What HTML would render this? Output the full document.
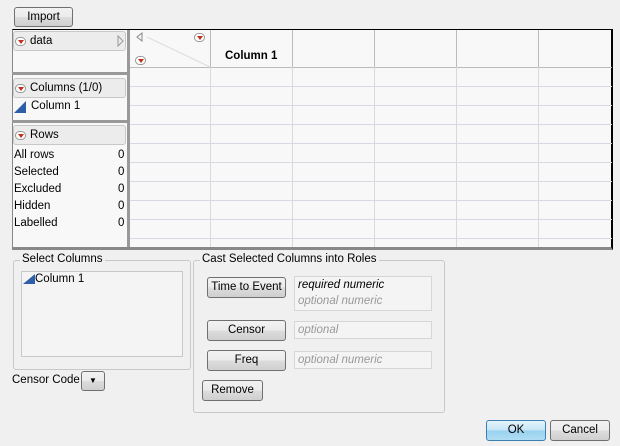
<!DOCTYPE html>
<html><head><style>
*{box-sizing:border-box;margin:0;padding:0}
body{width:620px;height:446px;background:#f0f0f0;font-family:"Liberation Sans",sans-serif;font-size:11.5px;color:#000;position:relative;overflow:hidden}
.a{position:absolute}
.btn{position:absolute;border:1px solid #707070;border-radius:3px;background:linear-gradient(#f2f2f2,#ebebeb 50%,#dddddd 50%,#cfcfcf);text-align:center;font-size:11.5px}
.hl{position:absolute;height:1px;background:#d8d8e2}
.vl{position:absolute;width:1px;background:#d8d8e2}
.hdr{position:absolute;left:13px;width:113px;border:1px solid #c8c8c8;border-radius:3px;background:#ececec;height:20px;padding-left:16px;line-height:18px}
.dd{position:absolute;width:11px;height:9px;border:1px solid #999;border-radius:5px;background:#fff}
.dd:after{content:"";position:absolute;left:2px;top:2px;border-left:3px solid transparent;border-right:3px solid transparent;border-top:4px solid #c0301c}
.fs{position:absolute;border:1px solid #c8c8c8;border-radius:3px}
.lg{position:absolute;background:#f0f0f0;padding:0 2px;top:-8px}
.fld{position:absolute;border:1px solid #d6d6d6;background:#f4f4f4;font-style:italic;color:#999;padding-left:3px}
</style></head><body>
<div class="btn" style="left:14px;top:7px;width:59px;height:20px;line-height:18px">Import</div>

<div class="a" style="left:12px;top:29px;width:601px;height:221px;background:#f8f8f8;border-top:1px solid #000;border-right:2px solid #000;border-bottom:3px solid #888;border-left:1px solid #888"></div>
<div class="a" style="left:127px;top:30px;width:3px;height:217px;background:#999"></div>
<div class="a" style="left:12px;top:72px;width:115px;height:3px;background:#999"></div>
<div class="a" style="left:12px;top:120px;width:115px;height:3px;background:#999"></div>

<div class="hdr" style="top:31px">data</div><div class="dd" style="left:15px;top:37px"></div>
<div class="a" style="left:117px;top:35px;width:8px;height:12px"><svg width="8" height="12"><path d="M1 1 L6 6 L1 11 Z" fill="none" stroke="#999"/></svg></div>
<div class="hdr" style="top:78px">Columns (1/0)</div><div class="dd" style="left:15px;top:84px"></div>
<div class="a" style="left:14px;top:101px;width:0;height:0;border-left:12px solid transparent;border-bottom:12px solid #2d5ea8"></div>
<div class="a" style="left:31px;top:100px">Column 1</div>
<div class="hdr" style="top:125px">Rows</div><div class="dd" style="left:15px;top:131px"></div>
<div class="a" style="left:14px;top:147px;line-height:17px">All rows<br>Selected<br>Excluded<br>Hidden<br>Labelled</div>
<div class="a" style="left:118px;top:147px;line-height:17px">0<br>0<br>0<br>0<br>0</div>

<div class="a" style="left:130px;top:67px;width:482px;height:1px;background:#bbb"></div>
<div class="hl" style="left:130px;top:86px;width:482px"></div>
<div class="hl" style="left:130px;top:105px;width:482px"></div>
<div class="hl" style="left:130px;top:124px;width:482px"></div>
<div class="hl" style="left:130px;top:143px;width:482px"></div>
<div class="hl" style="left:130px;top:162px;width:482px"></div>
<div class="hl" style="left:130px;top:181px;width:482px"></div>
<div class="hl" style="left:130px;top:200px;width:482px"></div>
<div class="hl" style="left:130px;top:219px;width:482px"></div>
<div class="hl" style="left:130px;top:238px;width:482px"></div>
<div class="a" style="left:210px;top:30px;width:1px;height:37px;background:#bbb"></div>
<div class="a" style="left:292px;top:30px;width:1px;height:37px;background:#bbb"></div>
<div class="a" style="left:374px;top:30px;width:1px;height:37px;background:#bbb"></div>
<div class="a" style="left:456px;top:30px;width:1px;height:37px;background:#bbb"></div>
<div class="a" style="left:538px;top:30px;width:1px;height:37px;background:#bbb"></div>
<div class="vl" style="left:210px;top:67px;height:180px"></div>
<div class="vl" style="left:292px;top:67px;height:180px"></div>
<div class="vl" style="left:374px;top:67px;height:180px"></div>
<div class="vl" style="left:456px;top:67px;height:180px"></div>
<div class="vl" style="left:538px;top:67px;height:180px"></div>
<svg class="a" style="left:130px;top:30px" width="82" height="38"><path d="M17 7 L80 37" stroke="#ddd"/><path d="M12 3 L7 7 L12 11 Z" fill="none" stroke="#888"/></svg>
<div class="dd" style="left:194px;top:33px"></div>
<div class="dd" style="left:135px;top:56px"></div>
<div class="a" style="left:225px;top:50px;font-weight:bold">Column 1</div>

<div class="fs" style="left:13px;top:260px;width:178px;height:110px"><div class="lg" style="left:6px">Select Columns</div></div>
<div class="a" style="left:21px;top:271px;width:162px;height:86px;border:1px solid #c8c8c8;background:#f4f4f4"></div>
<div class="a" style="left:23px;top:274px;width:0;height:0;border-left:12px solid transparent;border-bottom:10px solid #2d5ea8"></div>
<div class="a" style="left:35px;top:273px">Column 1</div>
<div class="a" style="left:12px;top:374px">Censor Code</div>
<div class="btn" style="left:81px;top:371px;width:24px;height:20px;font-size:8px;line-height:18px">▼</div>

<div class="fs" style="left:193px;top:260px;width:252px;height:153px"><div class="lg" style="left:6px">Cast Selected Columns into Roles</div></div>
<div class="btn" style="left:207px;top:277px;width:79px;height:21px;line-height:19px">Time to Event</div>
<div class="fld" style="left:294px;top:276px;width:138px;height:35px;line-height:16px"><span style="color:#000">required numeric</span><br>optional numeric</div>
<div class="btn" style="left:207px;top:320px;width:79px;height:21px;line-height:19px">Censor</div>
<div class="fld" style="left:294px;top:321px;width:138px;height:18px;line-height:17px">optional</div>
<div class="btn" style="left:207px;top:350px;width:79px;height:21px;line-height:19px">Freq</div>
<div class="fld" style="left:294px;top:351px;width:138px;height:18px;line-height:17px">optional numeric</div>
<div class="btn" style="left:202px;top:380px;width:61px;height:21px;line-height:19px">Remove</div>

<div class="btn" style="left:486px;top:420px;width:60px;height:21px;line-height:19px;border-color:#3c7fb1;background:linear-gradient(#e5f4fc,#c4e5f6 50%,#98d1ef 50%,#b0ddf3)">OK</div>
<div class="btn" style="left:550px;top:420px;width:60px;height:21px;line-height:19px">Cancel</div>
</body></html>
